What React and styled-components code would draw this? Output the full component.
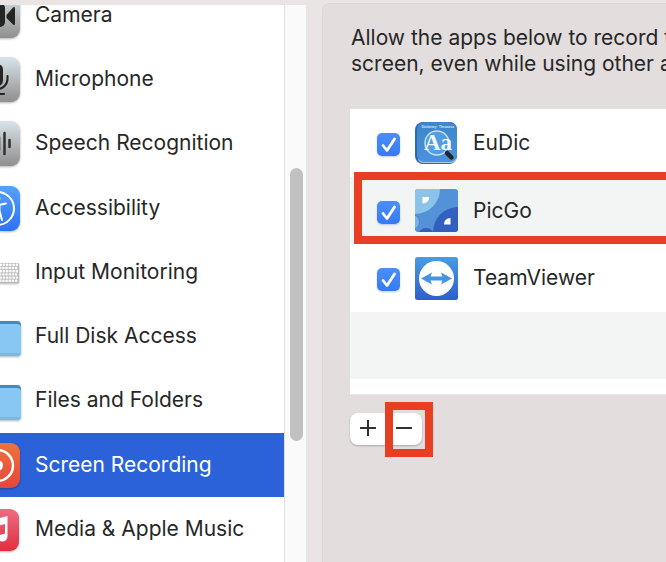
import React, { useState } from "react";
import styled, { createGlobalStyle, css } from "styled-components";

const GlobalStyle = createGlobalStyle`
  * { box-sizing: border-box; }
  body {
    margin: 0;
    background: #eae4e5;
    color: #272727;
    font-family: Inter, "Liberation Sans", sans-serif;
    font-size: 21px;
    line-height: 26px;
    overflow: hidden;
  }
`;

const Window = styled.div`
  display: flex;
  height: 100vh;
  gap: 15px;
  overflow: hidden;
`;

const Sidebar = styled.nav`
  display: flex;
  flex: none;
  width: 307px;
  margin-top: 5px;
  overflow: hidden;
  background: #fff;
`;

const CategoryList = styled.ul`
  flex: 1;
  min-width: 0;
  margin: -22px 0 0 -25px;
  padding: 0;
  list-style: none;
`;

const Category = styled.li`
  background: ${(p) => (p.$selected ? "#2b62d9" : "none")};
  &:nth-child(4n) { margin-top: 1px; }
`;

const CategoryLink = styled.a`
  display: flex;
  align-items: center;
  gap: 15px;
  height: 64px;
  color: ${(p) => (p.$selected ? "#fff" : "#272727")};
  text-decoration: none;
  white-space: nowrap;
`;

const CategoryIcon = styled.svg`
  flex: none;
  width: 45px;
  height: 45px;
  overflow: visible;
  filter: drop-shadow(0 1px 1px rgba(0, 0, 0, 0.3));
`;

const ScrollTrack = styled.div`
  display: flex;
  flex-direction: column;
  align-items: center;
  width: 23px;
  padding-left: 1px;
  background: #fafafa;
  border-left: 1px solid #e0e0e0;
  border-right: 1px solid #e6e4e4;
`;

const ScrollSpace = styled.div`
  flex: ${(p) => p.$share} 0 0;
`;

const ScrollThumb = styled.div`
  flex: 273 0 0;
  width: 13px;
  border-radius: 7px;
  background: #c1c1c1;
`;

const Panel = styled.main`
  flex: 1;
  min-width: 0;
  margin-top: 3px;
  padding: 21px 0 0 27px;
  border: 1px solid #ddd7d8;
  border-width: 1px 0 0 1px;
  border-radius: 8px 0 0 0;
  background: #e3ddde;
`;

const Description = styled.p`
  margin: 0 0 32px 1px;
  white-space: nowrap;
`;

const AppList = styled.ul`
  margin: 0;
  padding: 0 0 15px;
  list-style: none;
  background: #fff;
  border-bottom: 1px solid #ececec;
`;

const AppRow = styled.li`
  position: relative;
  height: 68px;
  &:nth-child(even) {
    height: 67px;
    background: #f3f5f5;
  }
`;

const AppLabel = styled.label`
  display: flex;
  align-items: center;
  height: 100%;
  padding-left: 27px;
`;

const CheckSlot = styled.span`
  display: grid;
  width: 23px;
  height: 23px;
  margin: 3px 15px 0 0;
  > * { grid-area: 1 / 1; }
`;

const Checkbox = styled.input`
  appearance: none;
  width: 23px;
  height: 23px;
  margin: 0;
  border-radius: 5px;
  background: #fff;
  box-shadow: 0 1px 2px rgba(40, 90, 200, 0.3);
  &:checked { background: linear-gradient(#4c8ef8, #357af4); }
`;

const CheckMark = styled.svg`
  width: 23px;
  height: 23px;
  pointer-events: none;
`;

const AppIcon = styled.svg`
  width: 43px;
  height: 43px;
  margin-right: 15px;
`;

const highlight = css`
  position: absolute;
  border: 8px solid #e83f24;
  pointer-events: none;
`;

const RowHighlight = styled.div`
  ${highlight}
  inset: -5px -16px 0 4px;
`;

const ButtonGroup = styled.div`
  display: inline-flex;
  margin-top: 18px;
  border-radius: 8px;
  background: #fff;
  box-shadow: 0 1px 2px rgba(0, 0, 0, 0.25);
`;

const ButtonSlot = styled.div`
  position: relative;
  display: flex;
`;

const ToolButton = styled.button`
  display: grid;
  place-items: center;
  width: 36px;
  height: 32px;
  padding: 0 0 2px;
  border: 0;
  background: none;
  color: #303030;
`;

const ButtonHighlight = styled.div`
  ${highlight}
  inset: -11px -11px -12px -1px;
`;

const Glyph = styled.svg`
  width: 18px;
  height: 18px;
`;

function Tile({ id, from, to, children }) {
  return (
    <CategoryIcon viewBox="0 0 45 45" aria-hidden="true">
      <defs>
        <linearGradient id={id} x1="0" y1="0" x2="0" y2="1">
          <stop offset="0" stopColor={from} />
          <stop offset="1" stopColor={to} />
        </linearGradient>
      </defs>
      <rect width="45" height="45" rx="9" fill={`url(#${id})`} />
      {children}
    </CategoryIcon>
  );
}

const CameraIcon = () => (
  <Tile id="camera" from="#d7e4ea" to="#918e8d">
    <rect x="5" y="10" width="25" height="24" rx="5" fill="#252525" />
    <path d="M31.500 22 38 14.500q2-1.500 2 1v15q0 2.500-2 1L31.500 25Z" fill="#252525" />
  </Tile>
);

const MicrophoneIcon = () => (
  <Tile id="mic" from="#d7e4ea" to="#918e8d">
    <rect x="17" y="7" width="11" height="22" rx="5.500" fill="#252525" />
    <path d="M12.500 19v3a10 10 0 0 0 20 0v-3M22.500 32v5M16 37h13" fill="none" stroke="#252525" strokeWidth="2" strokeLinecap="round" />
  </Tile>
);

const SpeechIcon = () => (
  <Tile id="speech" from="#d7e4ea" to="#918e8d">
    <path d="M11 19v7M15 12v21M19 17v11M24 16v13M29.500 12v21M34.500 19v7" fill="none" stroke="#303030" strokeWidth="2.500" strokeLinecap="round" />
  </Tile>
);

const AccessibilityIcon = () => (
  <Tile id="access" from="#55a2fb" to="#2e72f5">
    <circle cx="22.500" cy="22.500" r="16.500" fill="none" stroke="#fff" strokeWidth="2" />
    <circle cx="22.500" cy="12.500" r="2.800" fill="#fff" />
    <path d="M14 17.500l7 1.500h3l7-1.500M20.500 19v6l-2.500 9M24.500 19v6l2.500 9M22.500 19v6" fill="none" stroke="#fff" strokeWidth="2" strokeLinecap="round" />
  </Tile>
);

const KeyboardIcon = () => (
  <CategoryIcon viewBox="0 0 45 45" aria-hidden="true">
    <rect x="1" y="13" width="43" height="20" rx="1" fill="#b8b8b8" />
    {[0, 1, 2, 3, 4, 5].map((row) =>
      Array.from({ length: 13 }, (_, col) => (
        <rect key={`${row}-${col}`} x={(row % 2 ? 1.500 : 2.200) + col * 3.200} y={13.600 + row * 3.200} width="2.500" height="2.400" rx="0.400" fill="#fafafa" />
      ))
    )}
    <rect x="12" y="29.600" width="14" height="2.400" fill="#fafafa" />
  </CategoryIcon>
);

const FolderIcon = () => (
  <CategoryIcon viewBox="0 0 45 45" aria-hidden="true">
    <path d="M0 8q0-3 3-3h11l3 2h25q4 0 4 4v10H0Z" fill="#4689bd" />
    <path d="M0 10h42q4 0 4 4v24q0 4-4 4H0Z" fill="#88c7f3" />
    <path d="M0 39h46q-.5 3-4 3H0Z" fill="#79b7e5" />
  </CategoryIcon>
);

const RecordingIcon = () => (
  <Tile id="record" from="#ee733b" to="#e6463c">
    <circle cx="22.500" cy="22.500" r="15.500" fill="none" stroke="#fff" strokeWidth="2.500" />
    <circle cx="22.500" cy="22.500" r="5.500" fill="#fff" />
  </Tile>
);

const MusicIcon = () => (
  <CategoryIcon viewBox="0 0 45 45" aria-hidden="true">
    <defs>
      <linearGradient id="music" x1="0" y1="0" x2="0" y2="1">
        <stop offset="0" stopColor="#ec6c80" />
        <stop offset="1" stopColor="#e0303f" />
      </linearGradient>
    </defs>
    <rect x="1" y="2" width="43" height="42" rx="9" fill="url(#music)" />
    <path d="M17 13 32.500 9v20q0 5-5 5.500-4 0-4-3.500t5-4l1.500-.6V17L19.500 19.500v14q0 5-5 5.500-4 0-4-3.500t5-4l1.500-.6Z" fill="#fff" />
  </CategoryIcon>
);

const EuDicIcon = () => (
  <AppIcon viewBox="0 0 43 43" aria-hidden="true">
    <defs>
      <linearGradient id="eudic" x1="0" y1="0" x2="0" y2="1">
        <stop offset="0" stopColor="#3d86c9" />
        <stop offset="1" stopColor="#4a92e0" />
      </linearGradient>
    </defs>
    <rect width="42" height="42" rx="8" fill="#2d6aac" />
    <path d="M3 37h38v1q-1 3-6 3H9q-5 0-6-4Z" fill="#a9c9e5" />
    <rect x="2" y="0" width="40" height="40" rx="7" fill="url(#eudic)" />
    <text x="23" y="6" textAnchor="middle" fontFamily="Liberation Sans, sans-serif" fontSize="3" fontWeight="700" fill="#d7eaff">Dictionary · Thesaurus</text>
    <circle cx="22" cy="21" r="12" fill="#5ea9e9" fillOpacity=".6" stroke="#c9def0" strokeWidth="1.500" />
    <text x="23" y="28" textAnchor="middle" fontFamily="Liberation Serif, serif" fontSize="23" fontWeight="700" fill="#f2f8ff">Aa</text>
    <path d="M32 31l4.500 4.500" stroke="#252525" strokeWidth="4.500" strokeLinecap="round" />
  </AppIcon>
);

const PicGoIcon = () => (
  <AppIcon viewBox="0 0 43 43" aria-hidden="true">
    <defs>
      <clipPath id="picgo"><rect width="43" height="43" rx="3" /></clipPath>
    </defs>
    <g clipPath="url(#picgo)">
      <rect width="43" height="43" fill="#5392d8" />
      <circle cx="0" cy="0" r="25" fill="#8bc3e9" />
      <circle cx="43" cy="43" r="25" fill="#3360bf" />
      <circle cx="-3" cy="33" r="7.500" fill="#78b2e5" stroke="#3f7dca" strokeWidth=".6" />
      <circle cx="11" cy="47" r="8" fill="#3360bf" />
      <path d="M7.500 8H14q0 6-6.500 6.500Z" fill="#fff" />
      <path d="M35.500 29v6.500H29q0-6 6.500-6.500Z" fill="#fff" />
    </g>
  </AppIcon>
);

const TeamViewerIcon = () => (
  <AppIcon viewBox="0 0 43 43" aria-hidden="true">
    <defs>
      <linearGradient id="teamviewer" x1="0" y1="0" x2="0" y2="1">
        <stop offset="0" stopColor="#4b9be2" />
        <stop offset="1" stopColor="#2c60cc" />
      </linearGradient>
    </defs>
    <rect width="43" height="43" rx="2.500" fill="url(#teamviewer)" />
    <circle cx="21.500" cy="21.500" r="17.500" fill="#fff" />
    <path d="M6 21.500 17 15.500 15.500 19.500h12L26 15.500 37 21.500 26 27.500 27.500 23.500h-12L17 27.500Z" fill="#4593e0" />
  </AppIcon>
);

const categories = [
  ["Camera", CameraIcon],
  ["Microphone", MicrophoneIcon],
  ["Speech Recognition", SpeechIcon],
  ["Accessibility", AccessibilityIcon],
  ["Input Monitoring", KeyboardIcon],
  ["Full Disk Access", FolderIcon],
  ["Files and Folders", FolderIcon],
  ["Screen Recording", RecordingIcon],
  ["Media & Apple Music", MusicIcon],
];

const apps = [
  ["EuDic", EuDicIcon],
  ["PicGo", PicGoIcon],
  ["TeamViewer", TeamViewerIcon],
];

function AppEntry({ name, Icon, highlighted }) {
  const [checked, setChecked] = useState(true);
  return (
    <AppRow>
      <AppLabel>
        <CheckSlot>
          <Checkbox type="checkbox" checked={checked} onChange={(e) => setChecked(e.target.checked)} />
          {checked && (
            <CheckMark viewBox="0 0 23 23" aria-hidden="true">
              <path d="M6 12.500 10 17.500 17.500 6" fill="none" stroke="#fff" strokeWidth="2.800" strokeLinecap="round" strokeLinejoin="round" />
            </CheckMark>
          )}
        </CheckSlot>
        <Icon />
        <span>{name}</span>
      </AppLabel>
      {highlighted && <RowHighlight />}
    </AppRow>
  );
}

export default function App() {
  const [selected, setSelected] = useState("Screen Recording");
  return (
    <>
      <GlobalStyle />
      <Window>
        <Sidebar>
          <CategoryList>
            {categories.map(([name, Icon]) => (
              <Category key={name} $selected={name === selected}>
                <CategoryLink href="#" $selected={name === selected} onClick={() => setSelected(name)}>
                  <Icon />
                  <span>{name}</span>
                </CategoryLink>
              </Category>
            ))}
          </CategoryList>
          <ScrollTrack>
            <ScrollSpace $share={163} />
            <ScrollThumb />
            <ScrollSpace $share={121} />
          </ScrollTrack>
        </Sidebar>
        <Panel>
          <Description>
            Allow the apps below to record the
            <br />
            screen, even while using other apps
          </Description>
          <AppList>
            {apps.map(([name, Icon]) => (
              <AppEntry key={name} name={name} Icon={Icon} highlighted={name === "PicGo"} />
            ))}
            <AppRow />
          </AppList>
          <ButtonGroup>
            <ToolButton aria-label="Add app">
              <Glyph viewBox="0 0 18 18"><path d="M1 9h16M9 1v16" stroke="currentColor" strokeWidth="2" /></Glyph>
            </ToolButton>
            <ButtonSlot>
              <ToolButton aria-label="Remove app">
                <Glyph viewBox="0 0 18 18"><path d="M1 9h16" stroke="currentColor" strokeWidth="2" /></Glyph>
              </ToolButton>
              <ButtonHighlight />
            </ButtonSlot>
          </ButtonGroup>
        </Panel>
      </Window>
    </>
  );
}
